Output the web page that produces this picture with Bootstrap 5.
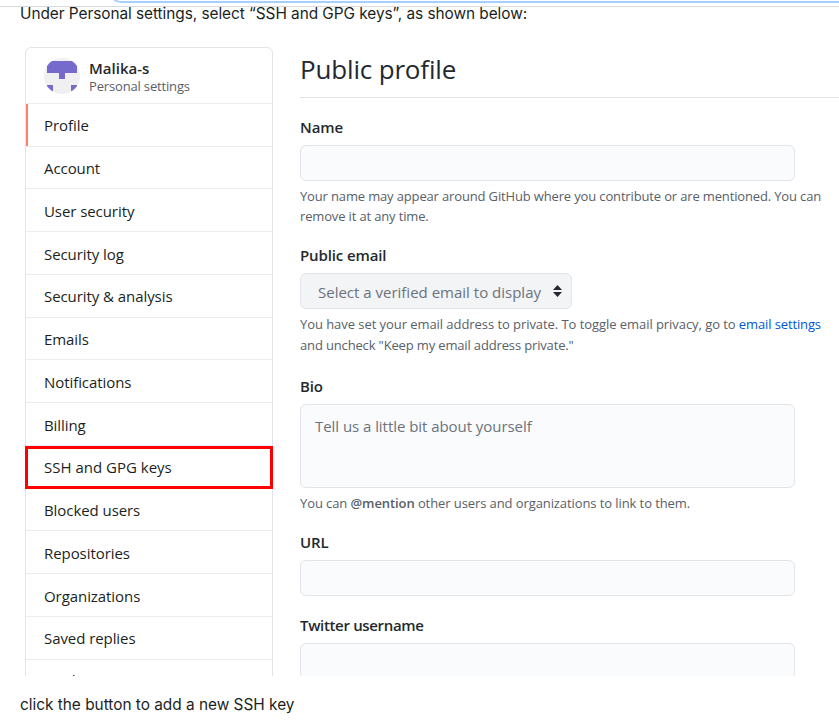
<!DOCTYPE html>
<html lang="en">
<head>
<meta charset="utf-8">
<meta name="viewport" content="width=device-width, initial-scale=1">
<title>Public profile</title>
<link href="https://cdn.jsdelivr.net/npm/bootstrap@5.3.0/dist/css/bootstrap.min.css" rel="stylesheet">
<style>
body{height:723px;font-family:"Open Sans","Noto Sans",sans-serif;font-size:15px;color:#24292e;background:#fff}
.top-strip{height:7px;border-bottom:1px solid #d9dadb}
.focus-box{height:30px;margin:-27px -20px 0 109px;border:2px solid #a6d0fb;border-radius:12px;flex:1}
.guide-text{font-family:Inter,sans-serif;font-size:15.4px;line-height:22px;color:#1b1f23;padding-left:20px;white-space:nowrap}
.guide-top{display:flow-root;height:40px;letter-spacing:-.05px}
.guide-top span{display:block;margin-top:-4px}
.guide-end{padding-top:18px;letter-spacing:-.01px}
.shot{height:629px;padding-left:25px}
.side-menu{width:248px;margin-right:27px;border:1px solid #e1e4e8;border-radius:6px 6px 0 0;height:760px}
.side-head{height:55.9px;border-bottom:1px solid #eaecef;padding:2px 0 0 18px;gap:9px}
.side-head strong{font-weight:600;line-height:18px;padding-top:2px}
.side-head small{font-size:13px;line-height:18px;color:#586069;letter-spacing:-.16px}
.side-menu a{height:42.75px;border-bottom:1px solid #eaecef;padding:1.5px 0 0 18px;color:#1b1f23;text-decoration:none;letter-spacing:-.07px;display:flex;align-items:center;white-space:nowrap}
.side-menu a.current{box-shadow:inset 2px 0 #f9826c}
.side-menu a.marked{margin:0 -1px;border:3px solid #f00;padding:0 0 0 16px;letter-spacing:0}
.side-menu a:last-child{padding-top:0;padding-bottom:1px}
.settings{width:539px;flex:none}
h1{font-size:26px;font-weight:400;height:51px;line-height:45px;border-bottom:1px solid #e1e4e8;margin:0 0 18px;letter-spacing:-.17px}
.field{margin-bottom:18px}
.field.name-field{margin-bottom:18px}
.field.email-field{margin-bottom:20px}
.field.bio-field{margin-bottom:17.5px}
.field label{display:block;font-weight:600;line-height:22px;margin-bottom:7px;letter-spacing:-.12px}
.field label.snug{letter-spacing:-.33px}
.field .form-control{width:495px;height:36px;border:1px solid #e1e4e8;border-radius:6px;background:#fafbfc;font-size:15px;padding:9px 14px;line-height:24px;resize:none}
.field textarea.form-control{height:84px;letter-spacing:-.05px;display:block}
.field textarea::placeholder{color:#6a737d}
.picker{width:272px;height:36px;border:1px solid #e1e4e8;border-radius:6px;background:#f3f4f6;color:#6a737d;padding:2px 9px 0 17px}
.picker svg{margin-bottom:2px}
.note{font-size:13px;line-height:20.5px;color:#586069;margin:5px 0 0;white-space:nowrap;letter-spacing:-.15px}
.name-field .note{line-height:20px}
.bio-field .note{letter-spacing:-.09px}
.note span{letter-spacing:-.06px}
.note a{color:#0055d4;text-decoration:none;letter-spacing:-.12px}
</style>
</head>
<body class="overflow-hidden">
<div class="top-strip d-flex overflow-hidden"><div class="focus-box"></div></div>
<div class="guide-text guide-top"><span>Under Personal settings, select “SSH and GPG keys”, as shown below:</span></div>
<div class="shot d-flex overflow-hidden">
  <nav class="side-menu flex-shrink-0">
    <div class="side-head d-flex align-items-center">
      <svg width="36" height="36" viewBox="0 0 36 36"><defs><clipPath id="round"><circle cx="18" cy="18" r="18"/></clipPath></defs><g clip-path="url(#round)"><path fill="#f0f0f0" d="M0 0h36v36H0z"/><path fill="#766bcd" d="M3 3h30v12H21v6h-6v-6H3zM3 27h6v6H3zM27 27h6v6h-6z"/></g></svg>
      <div class="d-flex flex-column"><strong>Malika-s</strong><small>Personal settings</small></div>
    </div>
    <a href="#" class="current">Profile</a>
    <a href="#">Account</a>
    <a href="#">User security</a>
    <a href="#">Security log</a>
    <a href="#">Security &amp; analysis</a>
    <a href="#">Emails</a>
    <a href="#">Notifications</a>
    <a href="#">Billing</a>
    <a href="#" class="marked">SSH and GPG keys</a>
    <a href="#">Blocked users</a>
    <a href="#">Repositories</a>
    <a href="#">Organizations</a>
    <a href="#">Saved replies</a>
    <a href="#">Applications</a>
  </nav>
  <main class="settings">
    <h1>Public profile</h1>
    <div class="field name-field">
      <label for="name">Name</label>
      <input id="name" class="form-control">
      <p class="note">Your name may appear around GitHub where you contribute or are mentioned. You can<br>remove it at any time.</p>
    </div>
    <div class="field email-field">
      <label>Public email</label>
      <div class="picker d-flex align-items-center justify-content-between">Select a verified email to display
        <svg width="9" height="12" viewBox="0 0 9 12"><path fill="#24292e" d="M4.500 0 9 5H0zM0 7h9l-4.500 5z"/></svg></div>
      <p class="note"><span>You have set your email address to private. To toggle email privacy, go to </span><a href="#">email settings</a><br>and uncheck "Keep my email address private."</p>
    </div>
    <div class="field bio-field">
      <label for="bio">Bio</label>
      <textarea id="bio" class="form-control" placeholder="Tell us a little bit about yourself"></textarea>
      <p class="note">You can <b class="fw-semibold">@mention</b> other users and organizations to link to them.</p>
    </div>
    <div class="field">
      <label for="url">URL</label>
      <input id="url" class="form-control">
    </div>
    <div class="field">
      <label for="tw" class="snug">Twitter username</label>
      <input id="tw" class="form-control">
    </div>
  </main>
</div>
<div class="guide-text guide-end">click the button to add a new SSH key</div>
<script src="https://cdn.jsdelivr.net/npm/bootstrap@5.3.0/dist/js/bootstrap.bundle.min.js"></script>
</body>
</html>
